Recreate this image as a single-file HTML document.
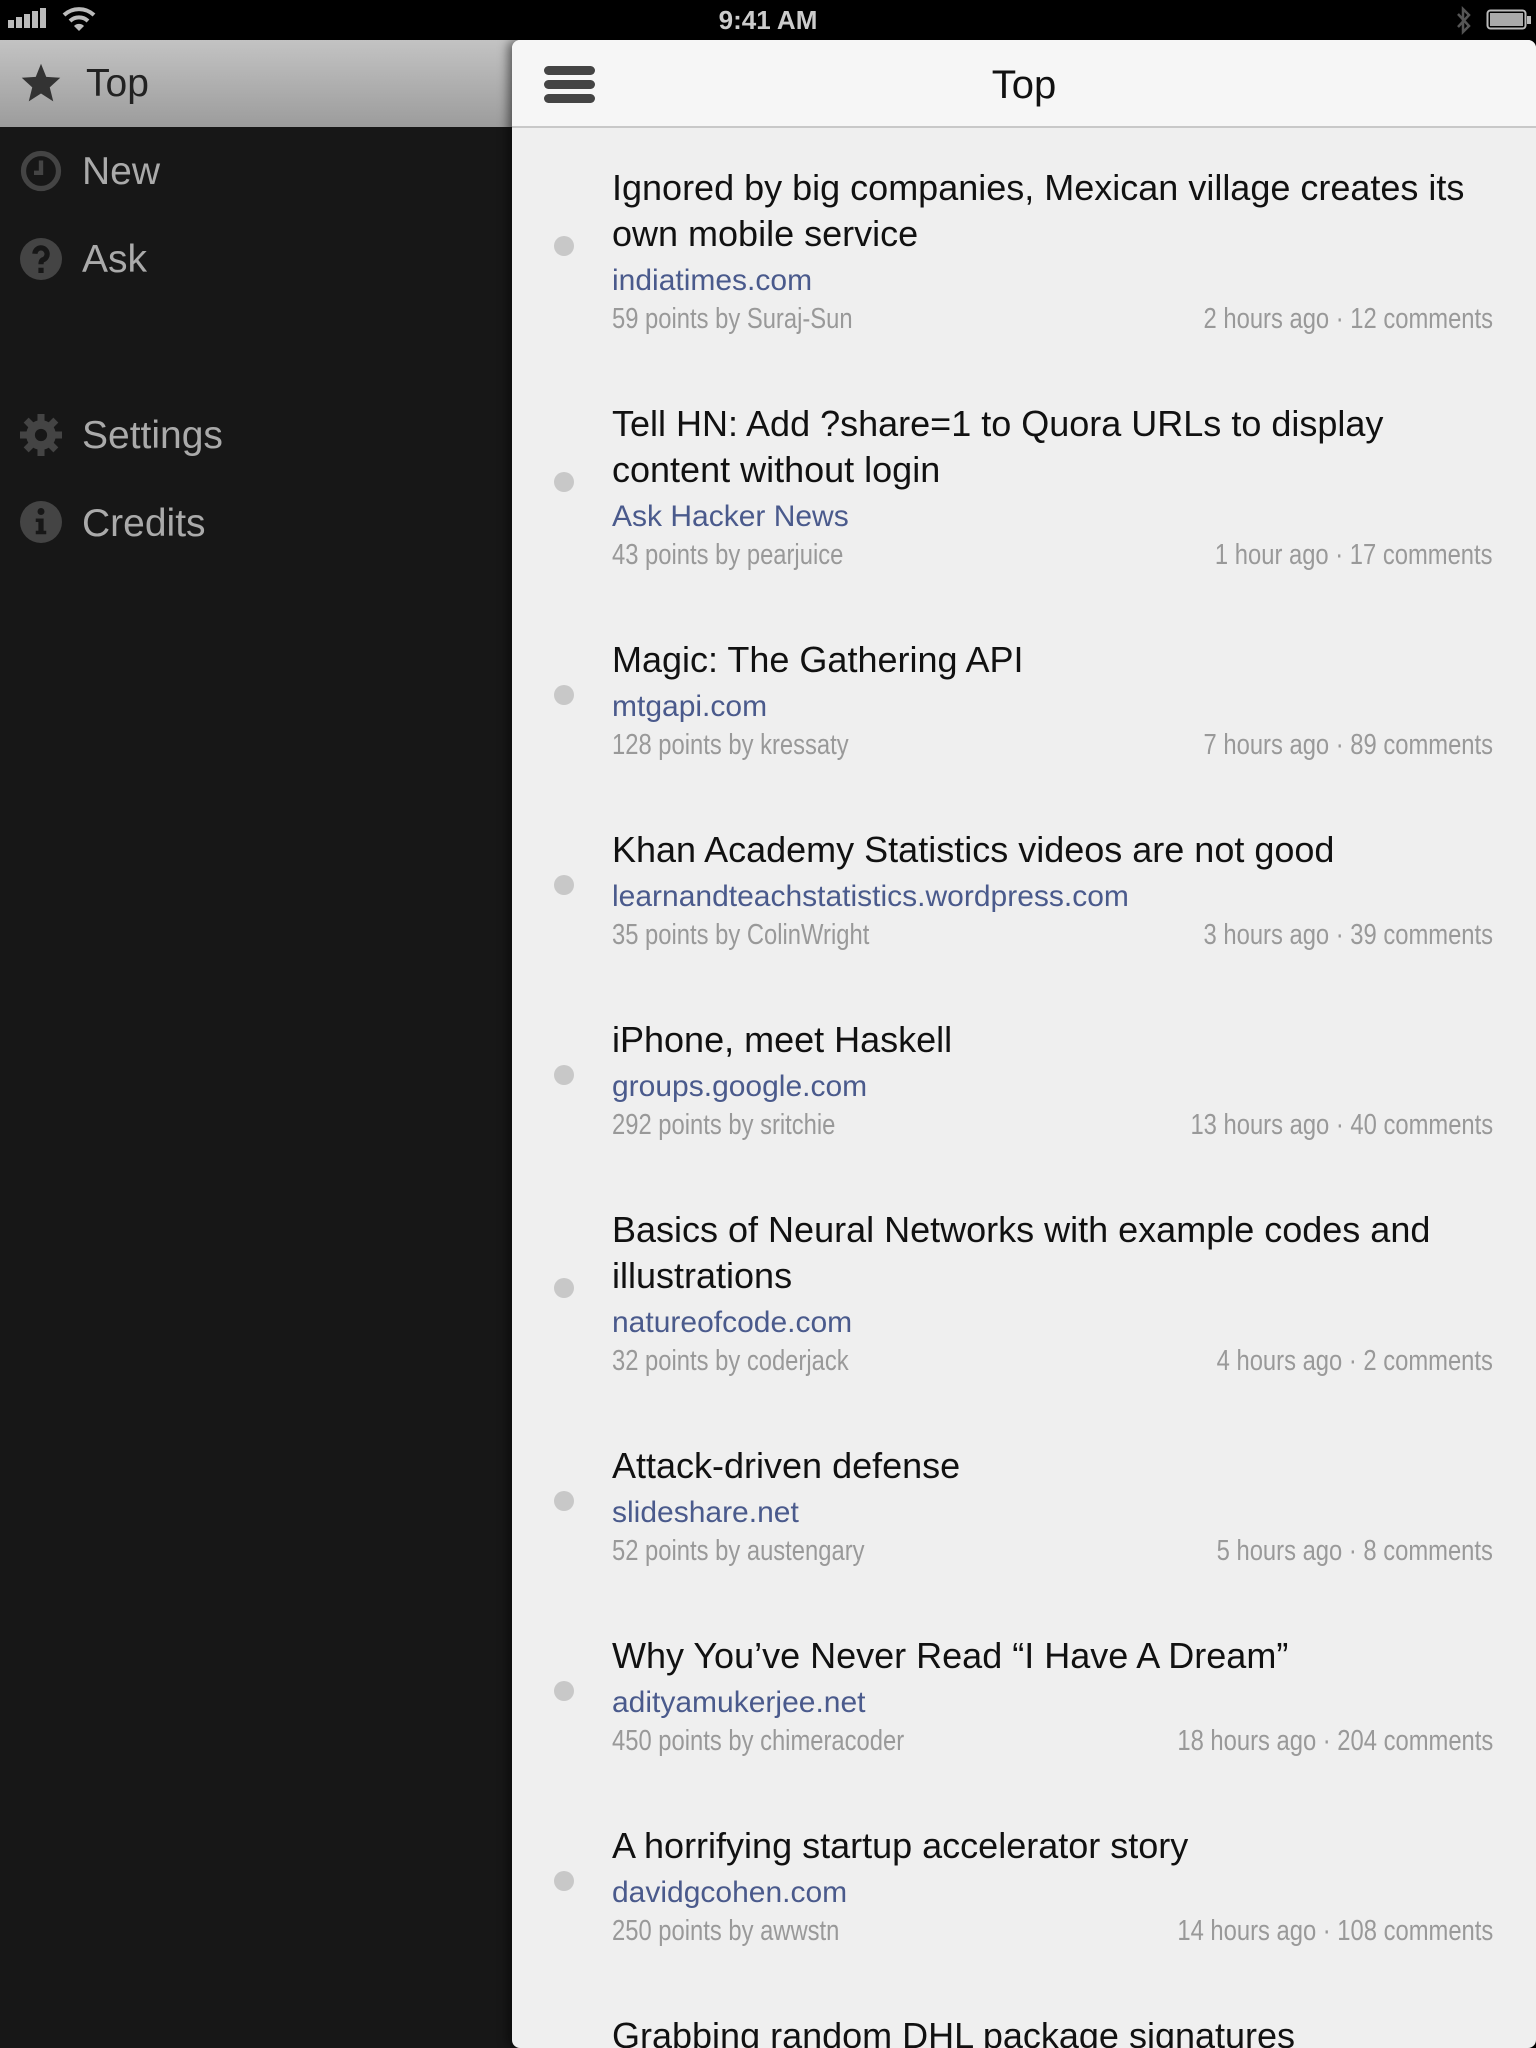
<!DOCTYPE html>
<html><head><meta charset="utf-8"><style>
*{margin:0;padding:0;box-sizing:border-box}
body{width:1536px;height:2048px;background:#000;overflow:hidden;font-family:"Liberation Sans",sans-serif;position:relative}
.status{position:absolute;left:0;top:0;width:1536px;height:40px;background:#000;color:#ddd}
.time{position:absolute;left:0;width:1536px;text-align:center;top:5px;font-size:26px;font-weight:bold;color:#ccc}
.side{position:absolute;left:0;top:40px;width:520px;height:2008px;background:#171717}
.toprow{position:absolute;left:0;top:0;width:520px;height:87px;background:linear-gradient(#c3c3c3,#9c9c9c)}
.mi{position:absolute;left:82px;font-size:39px;color:#aaa;line-height:48px}
.ic{position:absolute;left:20px;width:42px;height:42px}
.panel{position:absolute;left:512px;top:40px;width:1024px;height:2008px;background:#efefef;border-radius:8px;overflow:hidden;box-shadow:-4px 0 10px rgba(0,0,0,.5)}
.hdr{height:88px;background:#f6f6f6;border-bottom:2px solid #c8c8c8;position:relative}
.hdr .t{position:absolute;left:0;width:1024px;text-align:center;top:23px;font-size:40px;color:#111}
.bar{position:absolute;left:32px;width:51px;height:9px;border-radius:5px;background:#444}
.item{position:relative;padding:37px 43px 22px 100px}
.dot{position:absolute;left:42px;top:50%;margin-top:-10px;width:20px;height:20px;border-radius:50%;background:#c8c8c8}
.ti{font-size:36px;line-height:46px;color:#111;white-space:nowrap}
.dm{font-size:30px;line-height:47px;color:#4a5a8c;white-space:nowrap}
.mt{font-size:29px;line-height:38px;height:38px;color:#999;position:relative;white-space:nowrap}
.mt span{position:absolute;top:-4px;display:inline-block;transform:scaleX(.82)}
.mt .l{left:0;transform-origin:left}
.mt .r{right:0;transform-origin:right}
</style></head><body>
<div class="status">
<svg style="position:absolute;left:8px;top:8px" width="40" height="22"><rect x="0" y="12" width="6" height="8" fill="#bbb"/><rect x="8" y="9" width="6" height="11" fill="#bbb"/><rect x="16" y="6" width="6" height="14" fill="#bbb"/><rect x="24" y="3" width="6" height="17" fill="#bbb"/><rect x="32" y="0" width="6" height="20" fill="#bbb"/></svg>
<svg style="position:absolute;left:62px;top:6px" width="34" height="26" viewBox="0 0 34 26"><path d="M2 9 A22 22 0 0 1 32 9" stroke="#bbb" stroke-width="4" fill="none"/><path d="M8 15 A13 13 0 0 1 26 15" stroke="#bbb" stroke-width="4" fill="none"/><path d="M12 20 L17 25 L22 20 A7 7 0 0 0 12 20Z" fill="#bbb"/></svg>
<div class="time">9:41 AM</div>
<svg style="position:absolute;left:1454px;top:6px" width="20" height="30" viewBox="0 0 20 30"><path d="M4 8 L15 20 L9 26 L9 3 L15 9 L4 21" stroke="#555" stroke-width="2.5" fill="none"/></svg>
<svg style="position:absolute;left:1486px;top:9px" width="48" height="22"><rect x="1.5" y="1.5" width="38" height="18" rx="3" stroke="#bbb" stroke-width="2" fill="none"/><rect x="4" y="4" width="33" height="13" fill="#aaa"/><rect x="41" y="7" width="4" height="8" fill="#bbb"/></svg>
</div>
<div class="side">
<div class="toprow">
<svg class="ic" style="top:22px" viewBox="0 0 24 24"><path d="M12 1 L15 8.5 L23 9 L17 14.5 L19 22.5 L12 18 L5 22.5 L7 14.5 L1 9 L9 8.5Z" fill="#333"/></svg>
<div class="mi" style="top:20px;left:86px;color:#222">Top</div>
</div>
<svg class="ic" style="top:110px" viewBox="0 0 24 24"><circle cx="12" cy="12" r="10" stroke="#444" stroke-width="3" fill="none"/><path d="M12 6 V13 H8" stroke="#444" stroke-width="2.5" fill="none"/></svg>
<div class="mi" style="top:108px">New</div>
<svg class="ic" style="top:198px" viewBox="0 0 24 24"><circle cx="12" cy="12" r="12" fill="#444"/><path d="M8.5 9 A3.5 3.5 0 1 1 13 12.5 Q12 13 12 15" stroke="#171717" stroke-width="3" fill="none"/><rect x="10.5" y="17" width="3" height="3" fill="#171717"/></svg>
<div class="mi" style="top:196px">Ask</div>
<svg class="ic" style="top:374px" viewBox="0 0 24 24"><g fill="#444"><circle cx="12" cy="12" r="8.5"/><rect x="10" y="0" width="4" height="24"/><rect x="0" y="10" width="24" height="4"/><rect x="10" y="0" width="4" height="24" transform="rotate(45 12 12)"/><rect x="10" y="0" width="4" height="24" transform="rotate(-45 12 12)"/></g><circle cx="12" cy="12" r="3.5" fill="#171717"/></svg>
<div class="mi" style="top:372px">Settings</div>
<svg class="ic" style="top:461px" viewBox="0 0 24 24"><circle cx="12" cy="12" r="12" fill="#444"/><circle cx="12" cy="6" r="2" fill="#171717"/><path d="M9 10 H13.5 V17 H15 V19 H9 V17 H10.5 V12 H9Z" fill="#171717"/></svg>
<div class="mi" style="top:460px">Credits</div>
</div>
<div class="panel">
<div class="hdr"><div class="bar" style="top:26px"></div><div class="bar" style="top:40px"></div><div class="bar" style="top:54px"></div><div class="t">Top</div></div>
<div class="item"><div class="dot"></div><div class="ti">Ignored by big companies, Mexican village creates its<br>own mobile service</div><div class="dm">indiatimes.com</div><div class="mt"><span class="l">59 points by Suraj-Sun</span><span class="r">2 hours ago · 12 comments</span></div></div>
<div class="item"><div class="dot"></div><div class="ti">Tell HN: Add ?share=1 to Quora URLs to display<br>content without login</div><div class="dm">Ask Hacker News</div><div class="mt"><span class="l">43 points by pearjuice</span><span class="r">1 hour ago · 17 comments</span></div></div>
<div class="item"><div class="dot"></div><div class="ti">Magic: The Gathering API</div><div class="dm">mtgapi.com</div><div class="mt"><span class="l">128 points by kressaty</span><span class="r">7 hours ago · 89 comments</span></div></div>
<div class="item"><div class="dot"></div><div class="ti">Khan Academy Statistics videos are not good</div><div class="dm">learnandteachstatistics.wordpress.com</div><div class="mt"><span class="l">35 points by ColinWright</span><span class="r">3 hours ago · 39 comments</span></div></div>
<div class="item"><div class="dot"></div><div class="ti">iPhone, meet Haskell</div><div class="dm">groups.google.com</div><div class="mt"><span class="l">292 points by sritchie</span><span class="r">13 hours ago · 40 comments</span></div></div>
<div class="item"><div class="dot"></div><div class="ti">Basics of Neural Networks with example codes and<br>illustrations</div><div class="dm">natureofcode.com</div><div class="mt"><span class="l">32 points by coderjack</span><span class="r">4 hours ago · 2 comments</span></div></div>
<div class="item"><div class="dot"></div><div class="ti">Attack-driven defense</div><div class="dm">slideshare.net</div><div class="mt"><span class="l">52 points by austengary</span><span class="r">5 hours ago · 8 comments</span></div></div>
<div class="item"><div class="dot"></div><div class="ti">Why You’ve Never Read “I Have A Dream”</div><div class="dm">adityamukerjee.net</div><div class="mt"><span class="l">450 points by chimeracoder</span><span class="r">18 hours ago · 204 comments</span></div></div>
<div class="item"><div class="dot"></div><div class="ti">A horrifying startup accelerator story</div><div class="dm">davidgcohen.com</div><div class="mt"><span class="l">250 points by awwstn</span><span class="r">14 hours ago · 108 comments</span></div></div>
<div class="item"><div class="ti">Grabbing random DHL package signatures</div></div>
</div>
</body></html>
